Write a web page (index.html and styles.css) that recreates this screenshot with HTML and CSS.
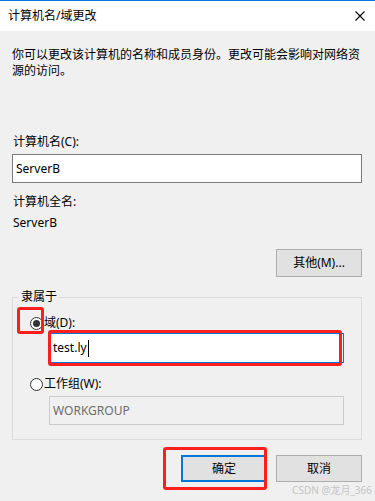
FILE: index.html
```html
<!DOCTYPE html>
<html lang="zh-CN">
<head>
<meta charset="utf-8">
<title>计算机名/域更改</title>
<link rel="stylesheet" href="styles.css">
</head>
<body>
<div class="dialog">
  <div class="titlebar">
    <span class="title">计算机名/域更改</span>
    <svg class="close" width="10" height="10" viewBox="0 0 10 10"><path d="M0.5 0.5 L9.5 9.5 M9.5 0.5 L0.5 9.5" stroke="#000" stroke-width="1.1" fill="none"/></svg>
  </div>
  <div class="content">
    <p class="desc">你可以更改该计算机的名称和成员身份。更改可能会影响对网络资源的访问。</p>
    <div class="label name-label">计算机名(C):</div>
    <div class="textbox">ServerB</div>
    <div class="label full-label">计算机全名:</div>
    <div class="label full-value">ServerB</div>
    <div class="btn-row other-row"><div class="btn">其他(M)...</div></div>
    <fieldset class="group">
      <legend>隶属于</legend>
      <div class="radio-row first"><span class="radio checked"></span><span>域(D):</span></div>
      <div class="textbox domain">test.ly<span class="caret"></span></div>
      <div class="radio-row second"><span class="radio"></span><span>工作组(W):</span></div>
      <div class="textbox disabled">WORKGROUP</div>
    </fieldset>
    <div class="btn-row actions">
      <div class="btn default">确定</div>
      <div class="btn">取消</div>
    </div>
  </div>
  <div class="mark mark-radio"></div>
  <div class="mark mark-domain"></div>
  <div class="mark mark-ok"></div>
  <div class="watermark">CSDN @龙月_366</div>
</div>
</body>
</html>
```
FILE: styles.css
```css
html, body {
  margin: 0;
  padding: 0;
  background: #f0f0f0;
}
body {
  font-family: "Noto Sans", "Noto Sans CJK SC", sans-serif;
  font-size: 12px;
  line-height: 16px;
  color: #000;
}
.dialog {
  position: relative;
  width: 375px;
  height: 501px;
  overflow: hidden;
}
.titlebar {
  height: 30px;
  border-top: 1px solid #0078d7;
  background: #fff;
  display: flex;
  align-items: center;
  justify-content: space-between;
  padding: 0 10px 0 8px;
}
.title {
  font-size: 12px;
  line-height: 16px;
}
.close {
  display: block;
  margin-top: -1px;
}
.content {
  padding: 16px 13px 0 12px;
}
.desc {
  margin: 0;
}
.label {
  line-height: 16px;
}
.name-label {
  margin-top: 55px;
  padding-left: 1px;
}
.textbox {
  box-sizing: border-box;
  height: 29px;
  border: 1px solid #7a7a7a;
  background: #fff;
  padding: 0 3px;
  display: flex;
  align-items: center;
  margin-top: 4px;
}
.full-label {
  margin-top: 11px;
  padding-left: 1px;
}
.full-value {
  margin-top: 5px;
  padding-left: 1px;
}
.btn-row {
  display: flex;
  justify-content: flex-end;
  gap: 9px;
}
.other-row {
  margin-top: 18px;
}
.btn {
  box-sizing: border-box;
  width: 86px;
  height: 28px;
  border: 1px solid #adadad;
  background: #e1e1e1;
  display: flex;
  align-items: center;
  justify-content: center;
}
.group {
  margin: 12px 0 0 0;
  padding: 0 0 14px 0;
  border: 1px solid #dcdcdc;
  min-width: 0;
}
.group legend {
  margin-left: 6px;
  padding: 0 2px;
  line-height: 16px;
}
.radio-row {
  display: flex;
  align-items: center;
  gap: 1px;
  padding-left: 17px;
  height: 16px;
}
.radio-row.first {
  margin-top: 10px;
}
.radio-row.second {
  margin-top: 13px;
}
.radio {
  box-sizing: border-box;
  width: 13px;
  height: 13px;
  border: 1px solid #333;
  border-radius: 50%;
  background: #fff;
  display: flex;
  align-items: center;
  justify-content: center;
}
.radio.checked::after {
  content: "";
  width: 7px;
  height: 7px;
  border-radius: 50%;
  background: #333;
}
.textbox.domain {
  margin: 2px 0 0 36px;
  width: 295px;
  height: 30px;
  border-color: #0078d7;
}
.caret {
  display: inline-block;
  width: 0;
  height: 17px;
  border-left: 1px solid #000;
  margin-left: 1px;
}
.textbox.disabled {
  margin: 4px 0 0 36px;
  width: 295px;
  border-color: #cccccc;
  background: #f0f0f0;
  color: #6d6d6d;
}
.actions {
  margin-top: 15px;
}
.actions .btn {
  height: 27px;
}
.btn.default {
  border: 2px solid #0078d7;
}
.mark {
  position: absolute;
  box-sizing: border-box;
  border: 3px solid #ff1e1e;
  border-radius: 3px;
}
.mark-radio {
  left: 17px;
  top: 307px;
  width: 27px;
  height: 27px;
}
.mark-domain {
  left: 48px;
  top: 330px;
  width: 294px;
  height: 36px;
}
.mark-ok {
  left: 163px;
  top: 447px;
  width: 104px;
  height: 43px;
}
.watermark {
  position: absolute;
  right: 3px;
  top: 483px;
  font-size: 10px;
  line-height: 14px;
  color: #c4c4c4;
  white-space: nowrap;
}
```
